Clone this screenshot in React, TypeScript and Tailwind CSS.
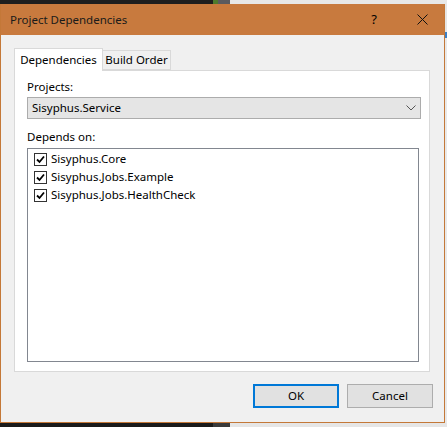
import React from 'react';

const deps = ['Sisyphus.Core', 'Sisyphus.Jobs.Example', 'Sisyphus.Jobs.HealthCheck'];

const CheckBox: React.FC = () => (
  <span className="w-[13px] h-[13px] border border-[#333333] bg-white flex items-center justify-center shrink-0">
    <svg width="9" height="9" viewBox="0 0 9 9">
      <path d="M1 4.5 L3.5 7 L8 1.5" fill="none" stroke="#000" strokeWidth="1.8" />
    </svg>
  </span>
);

const App: React.FC = () => {
  return (
    <div
      className="w-[447px] h-[427px] flex flex-col bg-[#1c1c1c] overflow-hidden text-[11.5px] text-black"
      style={{ fontFamily: '"Noto Sans", "Open Sans", sans-serif' }}
    >
      {/* strip of the window behind */}
      <div className="h-[4px] flex shrink-0">
        <div className="w-[213px] bg-[#1e1e1e]" />
        <div className="w-[5px] bg-[#4e7a2c]" />
        <div className="w-[12px] bg-[#5a5a5e]" />
        <div className="flex-1 bg-[#e8e8e8]" />
      </div>

      <div className="flex h-[419px] shrink-0">
        {/* dialog */}
        <div className="w-[445px] border border-t-0 border-[#c47838] bg-[#f0f0f0] flex flex-col">
          <div className="h-[31px] bg-[#c87a3e] flex items-center pl-[9px] shrink-0">
            <span className="flex-1 text-[11.5px] text-[#1a1a1a]">Project Dependencies</span>
            <span className="w-[14px] text-center mr-[36px] text-[13px]">?</span>
            <svg width="11" height="11" viewBox="0 0 11 11" className="mr-[16px]">
              <path d="M0.5 0.5 L10.5 10.5 M10.5 0.5 L0.5 10.5" stroke="#111" strokeWidth="1" />
            </svg>
          </div>

          <div className="flex flex-col pl-[13px] pr-[14px] pt-[13px]">
            {/* tabs */}
            <div className="flex items-end h-[22px]">
              <div className="h-[23px] w-[89px] bg-white border border-b-0 border-[#d9d9d9] flex items-center justify-center relative z-10 -mb-px">
                Dependencies
              </div>
              <div className="h-[20px] w-[68px] bg-[#f0f0f0] border border-l-0 border-[#d9d9d9] flex items-center justify-center">
                Build Order
              </div>
            </div>

            {/* panel */}
            <div className="h-[302px] bg-white border border-[#d9d9d9] flex flex-col pl-[12px] pr-[8px] pt-[8px]">
              <span className="leading-[16px]">Projects:</span>
              <div className="mt-[2px] h-[22px] bg-[#e5e5e5] border border-[#acacac] flex items-center pl-[4px] pr-[4px]">
                <span className="flex-1">Sisyphus.Service</span>
                <svg width="10" height="6" viewBox="0 0 10 6">
                  <path d="M0.5 0.5 L5 5 L9.5 0.5" fill="none" stroke="#555" strokeWidth="1" />
                </svg>
              </div>
              <span className="mt-[10px] leading-[16px]">Depends on:</span>
              <div className="mt-[3px] mr-[2px] h-[214px] border border-[#828790] flex flex-col pl-[6px] pt-[1px]">
                {deps.map((d) => (
                  <div key={d} className="h-[18px] flex items-center gap-[4px]">
                    <CheckBox />
                    <span>{d}</span>
                  </div>
                ))}
              </div>
            </div>

            {/* buttons */}
            <div className="flex justify-end gap-[8px] mt-[12px] -mr-[3px]">
              <button className="w-[86px] h-[24px] bg-[#e1e1e1] border-2 border-[#0078d7] flex items-center justify-center">
                OK
              </button>
              <button className="w-[86px] h-[24px] bg-[#e1e1e1] border border-[#adadad] flex items-center justify-center">
                Cancel
              </button>
            </div>
          </div>
        </div>
        <div className="flex-1 flex flex-col">
          <div className="h-[28px] bg-[#e6e6e6]" />
          <div className="h-[6px] bg-[#3b7fc4]" />
          <div className="flex-1 bg-[#e9e9e9]" />
        </div>
      </div>

      <div className="flex-1 flex">
        <div className="w-[213px] bg-[#1a1a1a]" />
        <div className="w-[17px] bg-[#3a3a3a]" />
        <div className="flex-1 bg-[#e6e6e6]" />
      </div>
    </div>
  );
};

export default App;
